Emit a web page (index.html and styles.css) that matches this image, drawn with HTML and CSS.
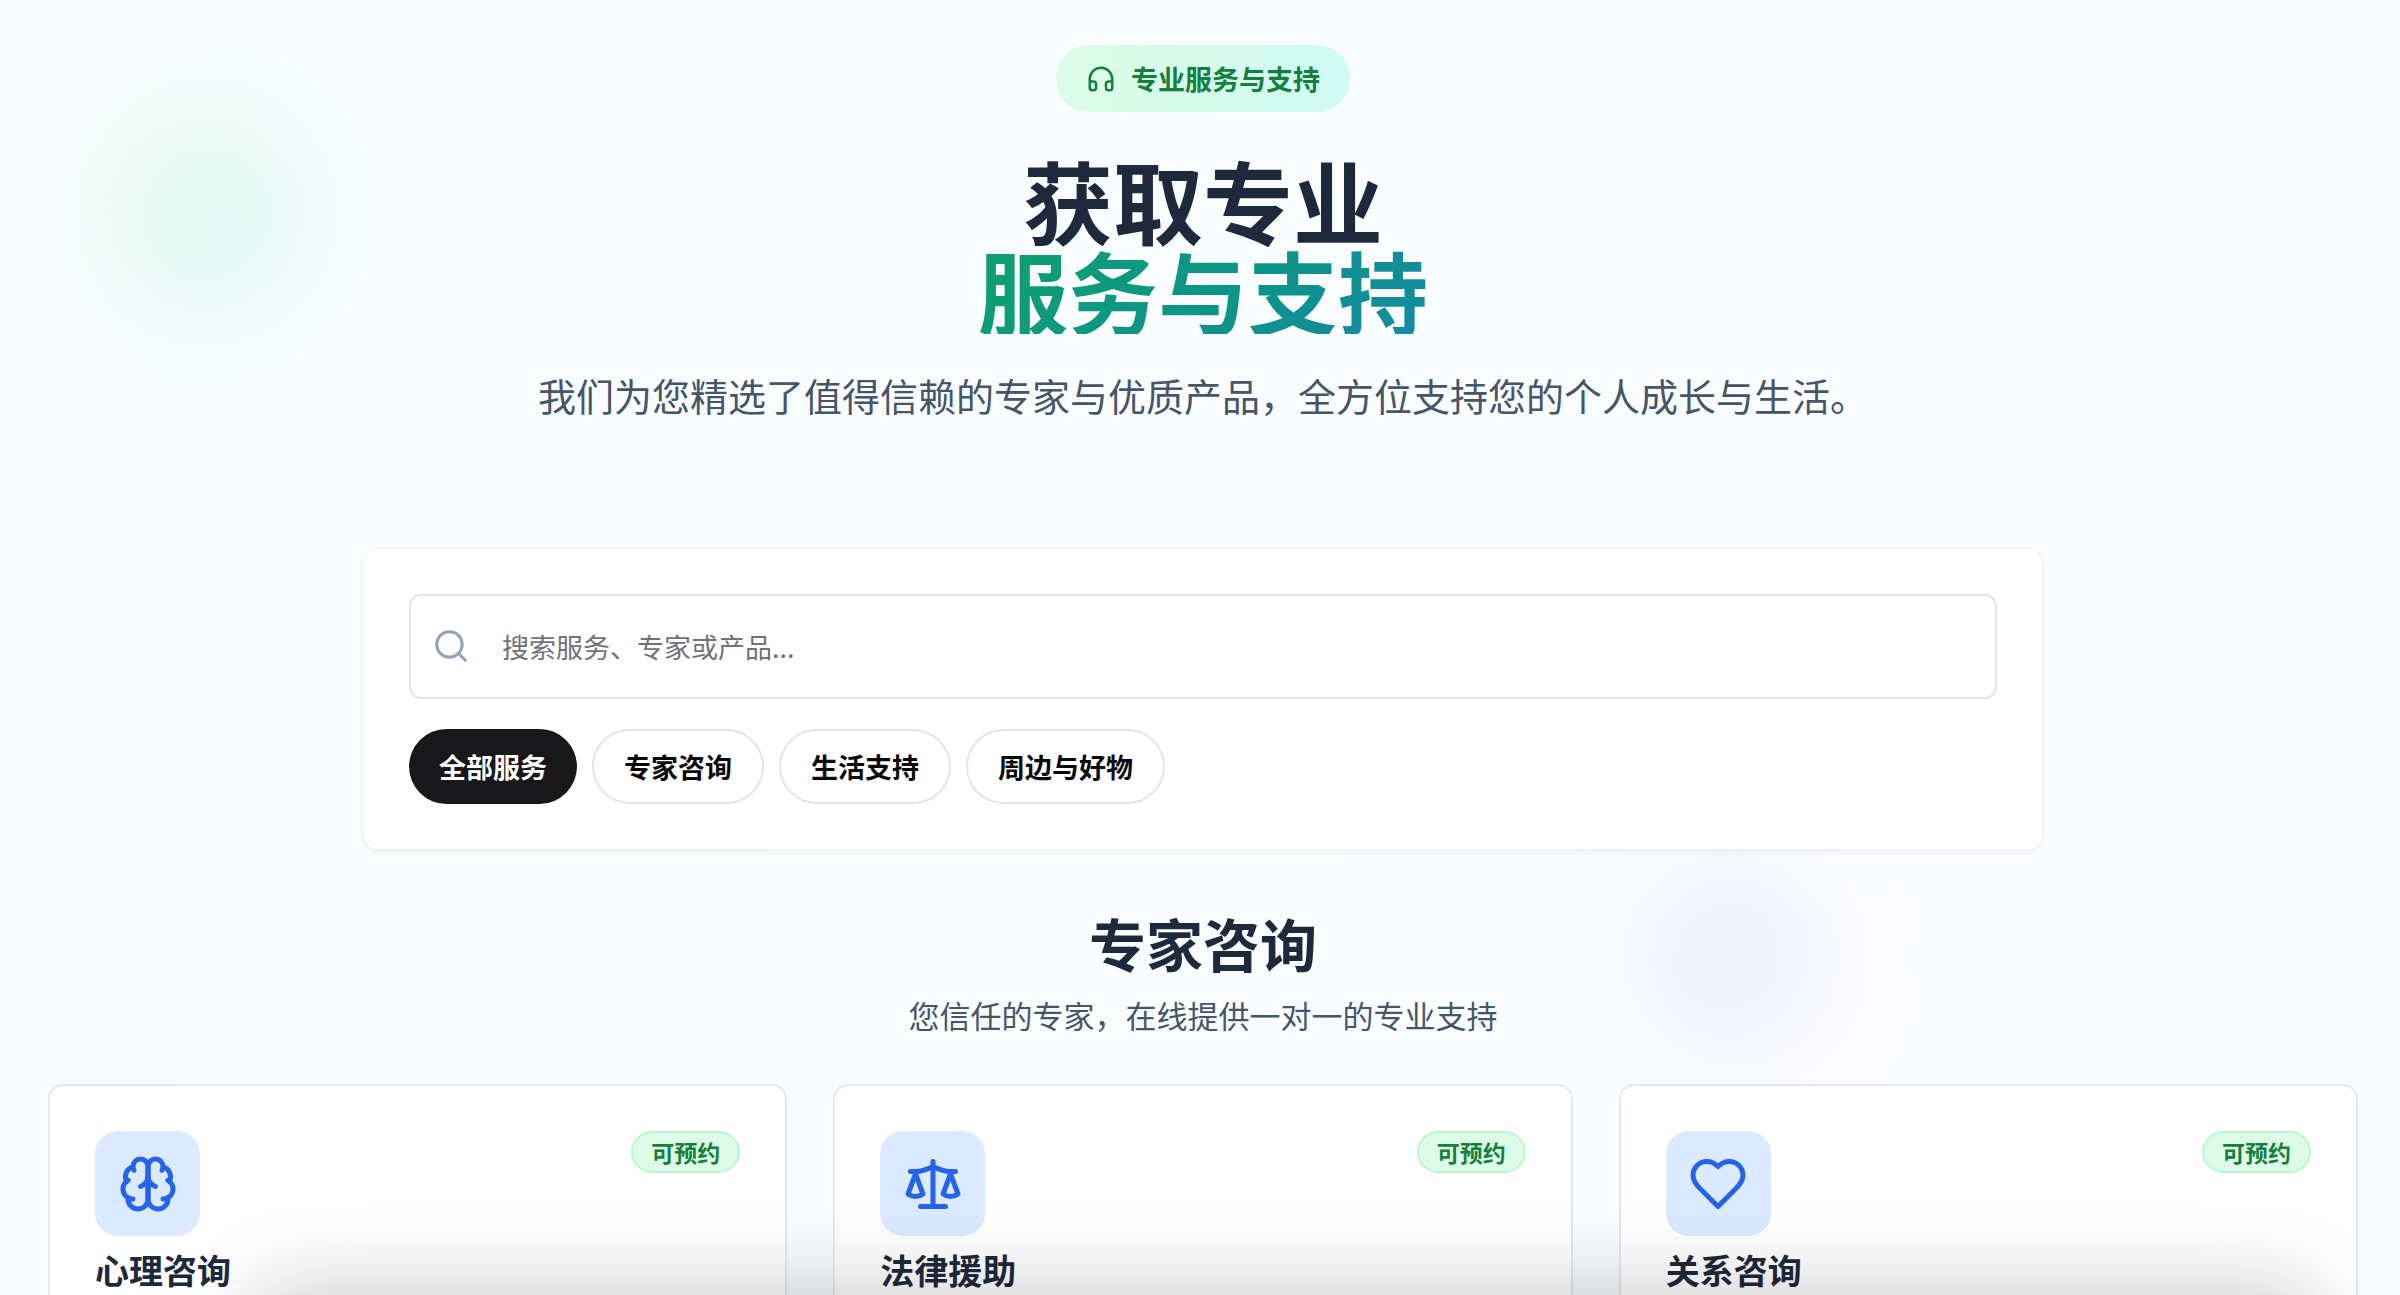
FILE: index.html
```html
<!DOCTYPE html>
<html lang="zh-CN">
<head>
  <meta charset="UTF-8" />
  <meta name="viewport" content="width=device-width, initial-scale=1" />
  <title>专业服务与支持</title>
  <link rel="stylesheet" href="styles.css">
</head>
<body>
  <div class="blob blob-green"></div>
  <div class="blob blob-purple"></div>

  <main class="page">
    <header class="hero">
      <div class="hero-badge">
        <svg class="icon" viewBox="0 0 24 24"><path d="M3 14h3a2 2 0 0 1 2 2v3a2 2 0 0 1-2 2H5a2 2 0 0 1-2-2v-7a9 9 0 0 1 18 0v7a2 2 0 0 1-2 2h-1a2 2 0 0 1-2-2v-3a2 2 0 0 1 2-2h3"/></svg>
        <span>专业服务与支持</span>
      </div>
      <h1>获取专业<span>服务与支持</span></h1>
      <p>我们为您精选了值得信赖的专家与优质产品，全方位支持您的个人成长与生活。</p>
    </header>

    <section class="search-card">
      <div class="search-box">
        <svg class="icon" viewBox="0 0 24 24"><circle cx="11" cy="11" r="8"/><path d="m21 21-4.3-4.3"/></svg>
        <input type="text" id="search" aria-label="搜索" placeholder="搜索服务、专家或产品..." />
      </div>
      <div class="filters">
        <button type="button" class="active">全部服务</button>
        <button type="button">专家咨询</button>
        <button type="button">生活支持</button>
        <button type="button">周边与好物</button>
      </div>
    </section>

    <section class="experts">
      <h2>专家咨询</h2>
      <p class="subtitle">您信任的专家，在线提供一对一的专业支持</p>

      <div class="grid">
        <article class="card">
          <div class="card-top">
            <div class="card-icon">
              <svg class="icon" viewBox="0 0 24 24"><path d="M12 5a3 3 0 1 0-5.997.125 4 4 0 0 0-2.526 5.77 4 4 0 0 0 .556 6.588A4 4 0 1 0 12 18Z"/><path d="M12 5a3 3 0 1 1 5.997.125 4 4 0 0 1 2.526 5.77 4 4 0 0 1-.556 6.588A4 4 0 1 1 12 18Z"/><path d="M15 13a4.5 4.5 0 0 1-3-4 4.5 4.5 0 0 1-3 4"/><path d="M17.599 6.5a3 3 0 0 0 .399-1.375"/><path d="M6.003 5.125A3 3 0 0 0 6.401 6.5"/><path d="M3.477 10.896a4 4 0 0 1 .585-.396"/><path d="M19.938 10.5a4 4 0 0 1 .585.396"/><path d="M6 18a4 4 0 0 1-1.967-.516"/><path d="M19.967 17.484A4 4 0 0 1 18 18"/></svg>
            </div>
            <span class="status">可预约</span>
          </div>
          <h3>心理咨询</h3>
        </article>

        <article class="card">
          <div class="card-top">
            <div class="card-icon">
              <svg class="icon" viewBox="0 0 24 24"><path d="m16 16 3-8 3 8c-.87.65-1.92 1-3 1s-2.130-.35-3-1Z"/><path d="m2 16 3-8 3 8c-.87.65-1.92 1-3 1s-2.130-.35-3-1Z"/><path d="M7 21h10"/><path d="M12 3v18"/><path d="M3 7h2c2 0 5-1 7-2 2 1 5 2 7 2h2"/></svg>
            </div>
            <span class="status">可预约</span>
          </div>
          <h3>法律援助</h3>
        </article>

        <article class="card">
          <div class="card-top">
            <div class="card-icon">
              <svg class="icon" viewBox="0 0 24 24"><path d="M19 14c1.490-1.460 3-3.210 3-5.500A5.500 5.500 0 0 0 16.500 3c-1.760 0-3 .5-4.500 2-1.500-1.500-2.740-2-4.500-2A5.500 5.500 0 0 0 2 8.500c0 2.300 1.500 4.050 3 5.500l7 7Z"/></svg>
            </div>
            <span class="status">可预约</span>
          </div>
          <h3>关系咨询</h3>
        </article>
      </div>
    </section>
  </main>

  <div class="bottom-shadow"></div>
</body>
</html>
```

FILE: styles.css
```css
* {
  box-sizing: border-box;
  margin: 0;
  padding: 0;
}

body {
  height: 100vh;
  overflow: hidden;
  position: relative;
  background: linear-gradient(100deg, #fafbfe 0%, #f8fcfd 8%, #f9fdfe 55%, #fbfcff 85%);
  font-family: "Noto Sans CJK SC", sans-serif;
  color: #1e293b;
}

.icon {
  fill: none;
  stroke: currentColor;
  stroke-width: 2;
  stroke-linecap: round;
  stroke-linejoin: round;
  flex-shrink: 0;
}

/* soft colour spots behind the content */
.blob {
  position: absolute;
  border-radius: 50%;
  filter: blur(48px);
}

.blob-green {
  top: 102px;
  left: 95px;
  width: 220px;
  height: 220px;
  background: linear-gradient(135deg, #bbf7d0, #99f6e4);
  opacity: 0.24;
}

.blob-purple {
  top: 868px;
  left: 1640px;
  width: 184px;
  height: 184px;
  background: linear-gradient(135deg, #bfdbfe, #e9d5ff);
  opacity: 0.3;
}

.page {
  position: relative;
  padding: 45px 42px 0 48px;
}

.hero {
  display: flex;
  flex-direction: column;
  align-items: center;
  text-align: center;
  margin-bottom: 122px;
}

.hero-badge {
  display: flex;
  align-items: center;
  gap: 15px;
  padding: 14px 30px;
  margin-bottom: 42px;
  border-radius: 34px;
  background: linear-gradient(90deg, #dcfce7, #d0fbf3);
  color: #15803d;
  font-size: 27px;
  font-weight: 700;
  line-height: 39px;
}

.hero-badge .icon {
  width: 30px;
  height: 30px;
}

h1 {
  font-size: 90px;
  font-weight: 700;
  line-height: 90px;
  margin-bottom: 30px;
}

h1 span {
  display: block;
  background: linear-gradient(135deg, #10a070 0%, #0d9488 55%, #168aa2 100%);
  -webkit-background-clip: text;
  background-clip: text;
  color: transparent;
}

.hero p {
  font-size: 38px;
  line-height: 62px;
  color: #475569;
}

.search-card {
  max-width: 1680px;
  margin: 0 auto 58px;
  padding: 45px;
  background: #fff;
  border: 1px solid #f1f3f5;
  border-radius: 15px;
  box-shadow: 0 2px 5px rgba(0, 0, 0, 0.06);
}

.search-box {
  position: relative;
  margin-bottom: 30px;
}

.search-box .icon {
  position: absolute;
  top: 33px;
  left: 23px;
  width: 38px;
  height: 38px;
  color: #94a3b8;
}

.search-box input {
  display: block;
  width: 100%;
  height: 105px;
  padding: 0 23px 0 91px;
  border: 2px solid #e4e4e7;
  border-radius: 12px;
  background: #fff;
  font: inherit;
  font-size: 27px;
  outline: none;
}

.search-box input::placeholder {
  color: #71717a;
}

.filters {
  display: flex;
  flex-wrap: wrap;
  gap: 15px;
}

.filters button {
  height: 75px;
  padding: 0 30px;
  border: 2px solid #e4e4e7;
  border-radius: 38px;
  background: #fff;
  color: #09090b;
  font: inherit;
  font-size: 27px;
  font-weight: 700;
  line-height: 38px;
  cursor: pointer;
}

.filters button.active {
  border: none;
  background: #18181b;
  color: #fff;
}

.experts {
  text-align: center;
}

h2 {
  font-size: 57px;
  font-weight: 700;
  line-height: 68px;
  margin-bottom: 16px;
}

.subtitle {
  font-size: 31px;
  line-height: 46px;
  margin-bottom: 46px;
  color: #475569;
}

.grid {
  display: grid;
  grid-template-columns: repeat(3, 1fr);
  gap: 46px;
  text-align: left;
}

.card {
  padding: 45px 45px 60px;
  background: #fff;
  border: 2px solid #e2e8f0;
  border-radius: 15px;
}

.card-top {
  display: flex;
  justify-content: space-between;
  align-items: flex-start;
  margin-bottom: 12px;
}

.card-icon {
  display: flex;
  align-items: center;
  justify-content: center;
  width: 105px;
  height: 105px;
  border-radius: 23px;
  background: #dbeafe;
  color: #2563eb;
}

.card-icon .icon {
  width: 60px;
  height: 60px;
}

.status {
  padding: 0 18px;
  border: 2px solid #bbf7d0;
  border-radius: 21px;
  background: #dcfce7;
  color: #15803d;
  font-size: 23px;
  font-weight: 700;
  line-height: 38px;
}

h3 {
  font-size: 34px;
  font-weight: 700;
  line-height: 44px;
}

/* shadow cast upwards by the bar below the fold */
.bottom-shadow {
  position: absolute;
  top: 100%;
  left: 260px;
  right: 90px;
  height: 100px;
  box-shadow: 0 0 90px rgba(0, 0, 0, 0.24);
}
```
